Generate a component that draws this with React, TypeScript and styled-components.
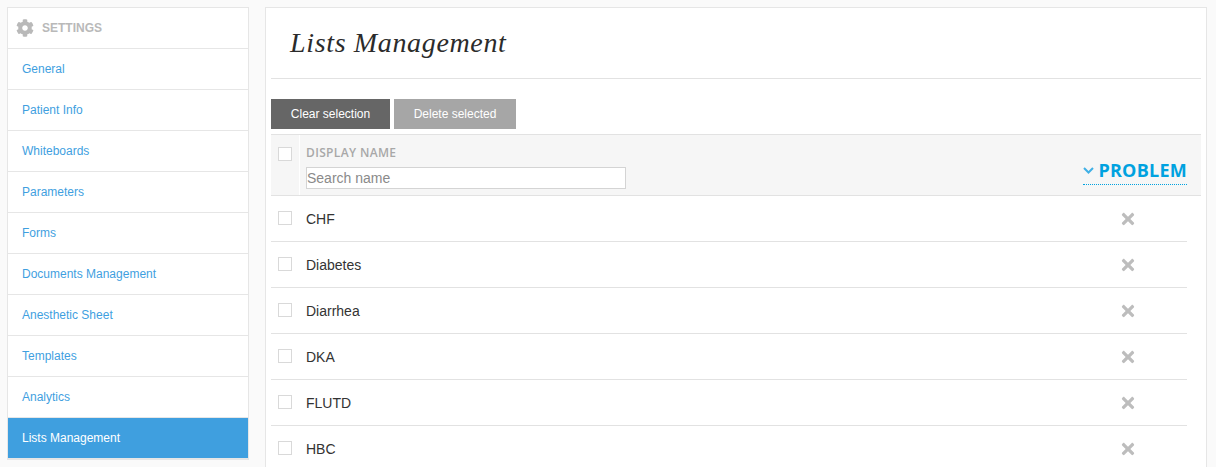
import React from 'react';
import styled, { createGlobalStyle } from 'styled-components';
import { FaCog, FaTimes } from 'react-icons/fa';

const GlobalStyle = createGlobalStyle`
  html, body {
    margin: 0;
    padding: 0;
    height: 467px;
    overflow: hidden;
    background-color: #fafafa;
    font-family: "Liberation Sans", Arial, sans-serif;
  }
`;

const Page = styled.div`
  display: flex;
  align-items: flex-start;
  gap: 16px;
  padding: 7px 9px 0 7px;
  height: 460px;
  overflow: hidden;
`;

const Sidebar = styled.nav`
  width: 242px;
  flex: none;
  box-sizing: border-box;
  background-color: #fff;
  border: 1px solid #e6e6e6;
`;

const SidebarHeader = styled.div`
  display: flex;
  align-items: center;
  gap: 8px;
  height: 40px;
  padding-left: 8px;
  border-bottom: 1px solid #e6e6e6;
  color: #b9b9b9;
  font-size: 12px;
  font-weight: 700;
`;

const NavItem = styled.a<{ $active?: boolean }>`
  display: flex;
  align-items: center;
  height: 40px;
  padding-left: 14px;
  border-bottom: 1px solid #e6e6e6;
  font-size: 12px;
  color: ${props => (props.$active ? '#fff' : '#3f9fdf')};
  background-color: ${props => (props.$active ? '#3f9fdf' : '#fff')};
`;

const Main = styled.main`
  flex: 1;
  box-sizing: border-box;
  height: 520px;
  padding: 0 19px 0 5px;
  background-color: #fff;
  border: 1px solid #e6e6e6;
`;

const Title = styled.h1`
  height: 71px;
  margin: 0 -14px 0 0;
  padding-left: 19px;
  box-sizing: border-box;
  border-bottom: 1px solid #e2e2e2;
  font-family: "Liberation Serif", "DejaVu Serif", serif;
  font-size: 28px;
  font-style: italic;
  font-weight: 400;
  letter-spacing: 0.65px;
  line-height: 70px;
  color: #2b2b2b;
`;

const Toolbar = styled.div`
  display: flex;
  gap: 4px;
  margin-top: 20px;
  margin-bottom: 5px;
`;

const ActionButton = styled.button<{ $muted?: boolean }>`
  height: 30px;
  width: ${props => (props.$muted ? '122px' : '119px')};
  padding: 0;
  border: 0;
  font-family: inherit;
  font-size: 12px;
  color: #fff;
  background-color: ${props => (props.$muted ? '#a6a6a6' : '#666')};
`;

const TableHead = styled.div`
  display: flex;
  height: 62px;
  box-sizing: border-box;
  margin-right: -14px;
  background-color: #f6f6f6;
  border-top: 1px solid #e2e2e2;
  border-bottom: 1px solid #e2e2e2;
`;

const CheckCell = styled.div`
  width: 29px;
  flex: none;
  box-sizing: border-box;
  padding: 12px 0 0 7px;
  border-right: 1px solid #fff;
`;

const CheckBox = styled.span`
  display: block;
  width: 14px;
  height: 14px;
  box-sizing: border-box;
  background-color: #fff;
  border: 1px solid #d9d9d9;
`;

const HeadBody = styled.div`
  flex: 1;
  display: flex;
  justify-content: space-between;
  padding: 10px 14px 0 6px;
`;

const ColumnLabel = styled.div`
  font-family: "Open Sans", "Noto Sans", sans-serif;
  font-size: 12px;
  font-weight: 600;
  letter-spacing: 0.35px;
  line-height: 16px;
  color: #a8a8a8;
`;

const SearchInput = styled.input`
  display: block;
  width: 320px;
  height: 22px;
  box-sizing: border-box;
  margin-top: 6px;
  padding: 0;
  border: 1px solid #d4d4d4;
  background-color: #fff;
  font-family: "Liberation Sans", Arial, sans-serif;
  font-size: 14px;
  &::placeholder {
    color: #8a8a8a;
    opacity: 1;
  }
`;

const SortLabel = styled.div`
  display: flex;
  align-items: center;
  gap: 4px;
  height: 24px;
  margin-top: 13px;
  padding-bottom: 2px;
  border-bottom: 1px dotted #00a2e0;
  font-family: "Open Sans", "Noto Sans", sans-serif;
  font-size: 18px;
  font-weight: 700;
  letter-spacing: 0.25px;
  color: #00a2e0;
`;

const Row = styled.div`
  display: flex;
  align-items: center;
  height: 46px;
  box-sizing: border-box;
  border-bottom: 1px solid #e2e2e2;
`;

const RowCheck = styled(CheckBox)`
  margin: -1px 14px 0 7px;
`;

const RowName = styled.span`
  flex: 1;
  font-size: 14px;
  color: #333;
`;

const RemoveIcon = styled(FaTimes)`
  width: 18px;
  height: 18px;
  margin: 0 50px 0 0;
  color: #bdbdbd;
`;

const navItems = [
  'General',
  'Patient Info',
  'Whiteboards',
  'Parameters',
  'Forms',
  'Documents Management',
  'Anesthetic Sheet',
  'Templates',
  'Analytics',
  'Lists Management',
];

const problems = ['CHF', 'Diabetes', 'Diarrhea', 'DKA', 'FLUTD', 'HBC'];

const App: React.FC = () => {
  return (
    <>
      <GlobalStyle />
      <Page>
        <Sidebar>
          <SidebarHeader>
            <FaCog size={18} />
            SETTINGS
          </SidebarHeader>
          {navItems.map(item => (
            <NavItem key={item} $active={item === 'Lists Management'}>
              {item}
            </NavItem>
          ))}
        </Sidebar>
        <Main>
          <Title>Lists Management</Title>
          <Toolbar>
            <ActionButton>Clear selection</ActionButton>
            <ActionButton $muted>Delete selected</ActionButton>
          </Toolbar>
          <TableHead>
            <CheckCell>
              <CheckBox />
            </CheckCell>
            <HeadBody>
              <div>
                <ColumnLabel>DISPLAY NAME</ColumnLabel>
                <SearchInput placeholder="Search name" />
              </div>
              <SortLabel>
                <svg width="11" height="7" viewBox="0 0 11 7" fill="none" stroke="#3fb0e6" strokeWidth="2">
                  <path d="M1 1l4.5 4.5L10 1" />
                </svg>
                PROBLEM
              </SortLabel>
            </HeadBody>
          </TableHead>
          {problems.map(name => (
            <Row key={name}>
              <RowCheck />
              <RowName>{name}</RowName>
              <RemoveIcon />
            </Row>
          ))}
        </Main>
      </Page>
    </>
  );
};

export default App;
